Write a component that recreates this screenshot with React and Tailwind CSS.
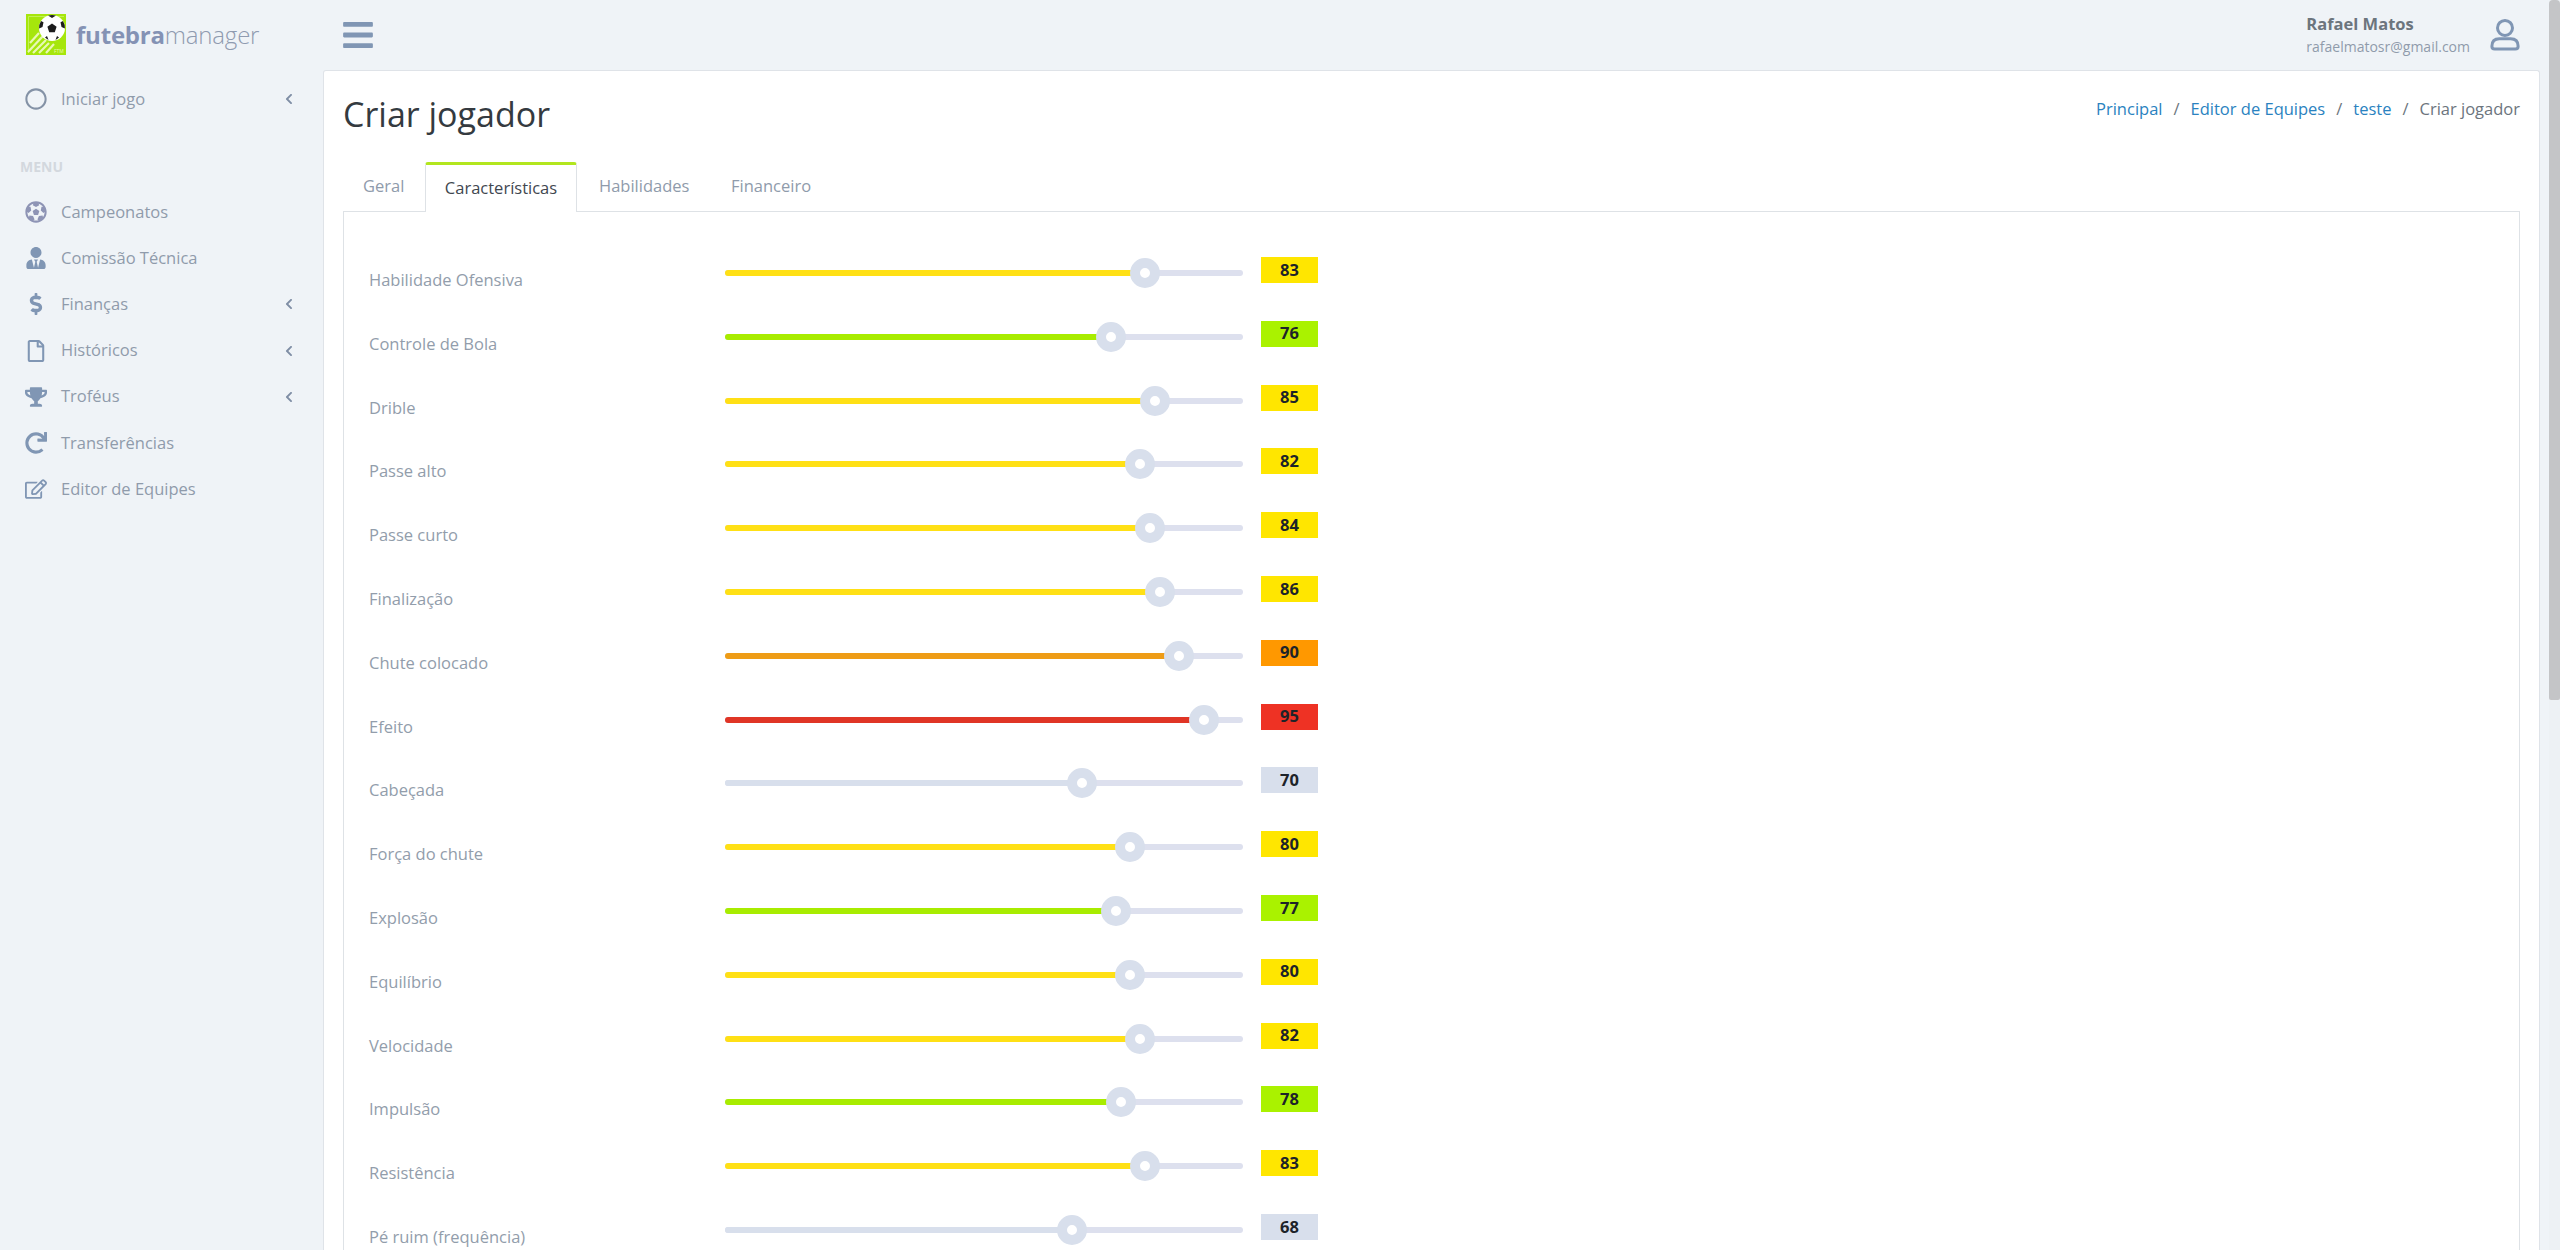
import { FaRegCircle, FaFutbol, FaUserTie, FaDollarSign, FaRegFile, FaTrophy, FaRedo, FaRegEdit, FaChevronLeft, FaBars } from "react-icons/fa";

const bandColors = {
    none: { fill: "bg-[#d8dfec]", badge: "bg-[#d8dfec]" },
    green: { fill: "bg-[#a8ec00]", badge: "bg-[#aaf200]" },
    yellow: { fill: "bg-[#ffe015]", badge: "bg-[#ffe600]" },
    orange: { fill: "bg-[#ee9c16]", badge: "bg-[#ff9800]" },
    red: { fill: "bg-[#e03526]", badge: "bg-[#ee3224]" },
};

const attributes = [
    ["Habilidade Ofensiva", 83, "yellow"],
    ["Controle de Bola", 76, "green"],
    ["Drible", 85, "yellow"],
    ["Passe alto", 82, "yellow"],
    ["Passe curto", 84, "yellow"],
    ["Finalização", 86, "yellow"],
    ["Chute colocado", 90, "orange"],
    ["Efeito", 95, "red"],
    ["Cabeçada", 70, "none"],
    ["Força do chute", 80, "yellow"],
    ["Explosão", 77, "green"],
    ["Equilíbrio", 80, "yellow"],
    ["Velocidade", 82, "yellow"],
    ["Impulsão", 78, "green"],
    ["Resistência", 83, "yellow"],
    ["Pé ruim (frequência)", 68, "none"],
];

const menu = [
    [FaFutbol, "Campeonatos", false, "text-[#8e94b5]"],
    [FaUserTie, "Comissão Técnica", false, "text-[#8096b4]"],
    [FaDollarSign, "Finanças", true, "text-[#8096b4]"],
    [FaRegFile, "Históricos", true, "text-[#8096b4]"],
    [FaTrophy, "Troféus", true, "text-[#8096b4]"],
    [FaRedo, "Transferências", false, "text-[#8096b4]"],
    [FaRegEdit, "Editor de Equipes", false, "text-[#8096b4]"],
];

function Logo() {
    return (
        <svg width="40" height="41" viewBox="0 0 40 41" className="shrink-0 mb-[2px]">
            <rect width="40" height="41" fill="#a6e60c" />
            <path d="M2.5 39V2.5H38" stroke="#c9f16a" strokeWidth="0.8" fill="none" />
            <path d="M2 38L17 22M7 39L20 26M13 39L23 29M4 29L13 19M20 39L28 30" stroke="#e8f8b4" strokeWidth="2.2" />
            <circle cx="26" cy="14" r="13" fill="#fff" />
            <path d="M26 9.5l4.6 3.3-1.8 5.4h-5.6l-1.8-5.4z" fill="#1c1c1c" />
            <path d="M22 1.6a13 13 0 0 1 8 0l-4 2.4zM15 7l2.5 1.2-1 4.8-3.4 1.6a13 13 0 0 1 1.9-7.6zM37 7l-2.5 1.2 1 4.8 3.4 1.6a13 13 0 0 0-1.9-7.6zM19 23.6l2-1.6 1.5 3.9a13 13 0 0 1-3.5-2.3zM33 23.6l-2-1.6-1.5 3.9a13 13 0 0 0 3.5-2.3z" fill="#1c1c1c" />
            <text x="28" y="39" fontSize="5" fill="#e8f9b0" fontFamily="Open Sans">FTM</text>
        </svg>
    );
}

function SidebarItem({ icon: Icon, label, hasChevron, color }) {
    return (
        <li className="flex items-center h-[46.2px] pl-[18px] pr-[28px]">
            <span className="w-[36px] flex justify-center shrink-0">
                <Icon className={`text-[22px] ${color}`} />
            </span>
            <span className="ml-[7px] text-[16.5px] text-[#8f9bab] flex-1">{label}</span>
            {hasChevron && <FaChevronLeft className="text-[12px] text-[#7f8ea5]" />}
        </li>
    );
}

function Sidebar() {
    return (
        <aside className="w-[323px] shrink-0">
            <div className="h-[70px] flex items-center pl-[26px]">
                <Logo />
                <span className="ml-[10px] text-[24px] tracking-[-0.2px]">
                    <span className="font-bold text-[#8492b4]">futebra</span>
                    <span className="font-light text-[#8f9bb0]">manager</span>
                </span>
            </div>
            <div className="flex items-center h-[46px] mt-[6px] pl-[18px] pr-[28px]">
                <span className="w-[36px] flex justify-center shrink-0">
                    <FaRegCircle className="text-[22px] text-[#8492a6]" />
                </span>
                <span className="ml-[7px] text-[16.5px] text-[#8f9bab] flex-1">Iniciar jogo</span>
                <FaChevronLeft className="text-[12px] text-[#7f8ea5]" />
            </div>
            <p className="mt-[35px] mb-[12px] pl-[20px] text-[14px] font-bold leading-[20px] text-[#d3d8de]">MENU</p>
            <ul>
                {menu.map(([icon, label, hasChevron, color]) => (
                    <SidebarItem key={label} icon={icon} label={label} hasChevron={hasChevron} color={color} />
                ))}
            </ul>
        </aside>
    );
}

function Header() {
    return (
        <header className="h-[70px] flex items-center justify-between pr-[29px]">
            <FaBars className="ml-[18px] text-[34px] text-[#8096b4]" />
            <div className="flex items-center">
                <div className="flex flex-col pt-[2px]">
                    <span className="text-[16.5px] font-bold leading-[22px] text-[#6c757d]">Rafael Matos</span>
                    <span className="text-[14px] leading-[24px] text-[#8f9bab]">rafaelmatosr@gmail.com</span>
                </div>
                <svg width="30" height="34" viewBox="0 0 32 36" fill="none" stroke="#8096b4" strokeWidth="3.2" className="ml-[20px]">
                    <circle cx="16" cy="10.5" r="8" />
                    <path d="M2 30c0-6 3-8 8-8h12c5 0 8 2 8 8 0 2-1 3-3 3H5c-2 0-3-1-3-3z" />
                </svg>
            </div>
        </header>
    );
}

function Breadcrumb() {
    return (
        <nav className="flex items-center pb-[10px] text-[16.5px] text-[#6c757d]">
            <span className="text-[#2a82c0]">Principal</span>
            <span className="mx-[11px]">/</span>
            <span className="text-[#2a82c0]">Editor de Equipes</span>
            <span className="mx-[11px]">/</span>
            <span className="text-[#2a82c0]">teste</span>
            <span className="mx-[11px]">/</span>
            <span>Criar jogador</span>
        </nav>
    );
}

function Tabs() {
    return (
        <div className="flex items-end h-[50px] text-[16.5px] text-[#8f9bab] relative z-10 -mb-px">
            <span className="w-[82px] pl-[20px] pb-[4px] h-[47px] flex items-center">Geral</span>
            <span className="w-[152px] h-[50px] flex items-center justify-center text-[#3f4750] bg-white border border-b-0 border-[#dee2e6] border-t-[3px] border-t-[#b2e61e] rounded-t-[3px]">Características</span>
            <span className="w-[132px] ml-[22px] pb-[4px] h-[47px] flex items-center">Habilidades</span>
            <span className="pb-[4px] h-[47px] flex items-center">Financeiro</span>
        </div>
    );
}

function AttributeRow({ label, value, band }) {
    const colors = bandColors[band];
    const center = 15 + value * 4.88;
    return (
        <div className="flex items-start h-[63.8px]">
            <span className="w-[381px] shrink-0 pl-[25px] pt-[9px] text-[16.5px] leading-[26px] text-[#929dab]">{label}</span>
            <div className="relative w-[518px] h-[30px] shrink-0">
                <div className="absolute left-0 right-0 top-[12px] h-[6px] rounded-full bg-[#dde0ee]" />
                <div className={`absolute left-0 top-[12px] h-[6px] rounded-l-full ${colors.fill}`} style={{ width: center }} />
                <div className="absolute top-0 w-[30px] h-[30px] rounded-full bg-white border-[10px] border-[#d8dfec]" style={{ left: center - 15 }} />
            </div>
            <span className={`ml-[18px] -mt-px w-[57px] h-[26px] shrink-0 flex items-center justify-center text-[16.5px] font-bold text-[#1d2329] ${colors.badge}`}>{value}</span>
        </div>
    );
}

export default function App() {
    return (
        <div className="h-screen overflow-hidden flex bg-[#eff3f7] font-['Open_Sans','Noto_Sans',sans-serif]">
            <Sidebar />
            <div className="flex-1 min-w-0 flex flex-col">
                <Header />
                <main className="flex-1 min-h-0 bg-white border border-b-0 border-[#dfe3e8] rounded-t-[3px] mr-[9px] px-[19px] pt-[18px]">
                    <div className="flex justify-between">
                        <h1 className="text-[34px] leading-[50px] text-[#343a40]">Criar jogador</h1>
                        <Breadcrumb />
                    </div>
                    <div className="mt-[23px]">
                        <Tabs />
                        <div className="border border-b-0 border-[#dee2e6] pt-[46px]">
                            {attributes.map(([label, value, band]) => (
                                <AttributeRow key={label} label={label} value={value} band={band} />
                            ))}
                        </div>
                    </div>
                </main>
            </div>
            <div className="w-[11px] shrink-0 bg-[#edf1f4] flex flex-col">
                <div className="h-[700px] rounded-t-[4px] rounded-b-[2px] bg-[#c4c5c7]" />
            </div>
        </div>
    );
}
